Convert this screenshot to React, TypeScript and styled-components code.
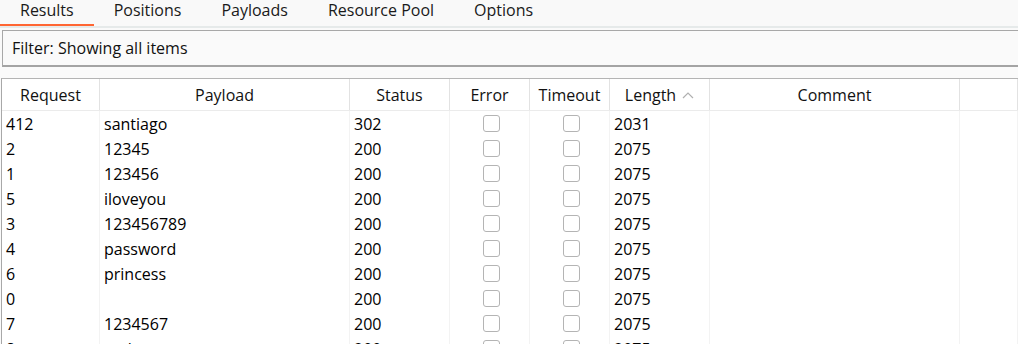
import { createGlobalStyle, styled } from "styled-components";

const GlobalStyle = createGlobalStyle`
  html, body {
    margin: 0;
    padding: 0;
    background: #fafafa;
    overflow: hidden;
  }
  body {
    font-family: "Open Sans", "Noto Sans", sans-serif;
    font-size: 16px;
    color: #000;
  }
`;

const COLS = "98px 250px 100px 80px 80px 100px 250px 1fr";

const tabs = ["Results", "Positions", "Payloads", "Resource Pool", "Options"];

const rows: [string, string, string, string][] = [
  ["412", "santiago", "302", "2031"],
  ["2", "12345", "200", "2075"],
  ["1", "123456", "200", "2075"],
  ["5", "iloveyou", "200", "2075"],
  ["3", "123456789", "200", "2075"],
  ["4", "password", "200", "2075"],
  ["6", "princess", "200", "2075"],
  ["0", "", "200", "2075"],
  ["7", "1234567", "200", "2075"],
  ["8", "rockyou", "200", "2075"],
];

const App = () => {
  return (
    <>
      <GlobalStyle />
      <Page>
        <TabBar>
          {tabs.map((t, i) => (
            <Tab key={t} $active={i === 0}>
              {t}
            </Tab>
          ))}
        </TabBar>
        <FilterBox>Filter: Showing all items</FilterBox>
        <Table>
          <HeaderRow>
            <HeadCell>Request</HeadCell>
            <HeadCell>Payload</HeadCell>
            <HeadCell>Status</HeadCell>
            <HeadCell>Error</HeadCell>
            <HeadCell>Timeout</HeadCell>
            <HeadCell>
              Length
              <SortIcon width="12" height="8" viewBox="0 0 12 8">
                <path d="M1 7 L6 2 L11 7" fill="none" stroke="#b0b0b0" strokeWidth="1.2" />
              </SortIcon>
            </HeadCell>
            <HeadCell>Comment</HeadCell>
            <HeadCell />
          </HeaderRow>
          {rows.map(([req, payload, status, length], i) => (
            <Row key={i}>
              <Cell>{req}</Cell>
              <Cell>{payload}</Cell>
              <Cell>{status}</Cell>
              <CheckCell>
                <CheckBox />
              </CheckCell>
              <CheckCell>
                <CheckBox />
              </CheckCell>
              <Cell>{length}</Cell>
              <Cell />
              <Cell />
            </Row>
          ))}
        </Table>
      </Page>
    </>
  );
};

export default App;

const Page = styled.div`
  width: 1018px;
  height: 344px;
  overflow: hidden;
  display: flex;
  flex-direction: column;
`;

const TabBar = styled.div`
  display: flex;
  flex-shrink: 0;
  height: 26px;
  border-bottom: 2px solid #e6eaea;
  background: #f9f9f9;
`;

const Tab = styled.div<{ $active?: boolean }>`
  padding: 0 20px;
  line-height: 20px;
  height: 26px;
  box-sizing: border-box;
  color: #1a1a1a;
  border-bottom: 2px solid ${(p) => (p.$active ? "#ff6633" : "transparent")};
`;

const FilterBox = styled.div`
  flex-shrink: 0;
  margin: 2px -10px 0 2px;
  height: 37px;
  box-sizing: border-box;
  border-top: 1px solid #a8a8a8;
  border-left: 1px solid #a8a8a8;
  border-bottom: 2px solid #a4a4a4;
  background: #fafafa;
  padding-left: 9px;
  display: flex;
  align-items: center;
  color: #111;
`;

const Table = styled.div`
  flex-shrink: 0;
  margin: 11px 0 0 1px;
  border-top: 1px solid #b4b4b4;
  border-left: 1px solid #a8a8a8;
  background: #fff;
`;

const HeaderRow = styled.div`
  display: grid;
  grid-template-columns: ${COLS};
  height: 31px;
  border-bottom: 1px solid #ebebeb;
`;

const HeadCell = styled.div`
  display: flex;
  align-items: center;
  justify-content: center;
  gap: 6px;
  border-right: 1px solid #e2e2e2;
  color: #111;
`;

const SortIcon = styled.svg`
  display: block;
  margin-top: 1px;
`;

const Row = styled.div`
  display: grid;
  grid-template-columns: ${COLS};
  height: 25px;
`;

const Cell = styled.div`
  display: flex;
  align-items: center;
  padding-left: 4px;
  border-right: 1px solid #f3f3f3;
  white-space: nowrap;
  overflow: hidden;
`;

const CheckCell = styled.div`
  display: flex;
  align-items: center;
  justify-content: center;
  padding-left: 4px;
  border-right: 1px solid #f3f3f3;
`;

const CheckBox = styled.div`
  width: 15px;
  height: 15px;
  border: 1.5px solid #b4b4b4;
  border-radius: 3px;
  background: #fff;
`;
